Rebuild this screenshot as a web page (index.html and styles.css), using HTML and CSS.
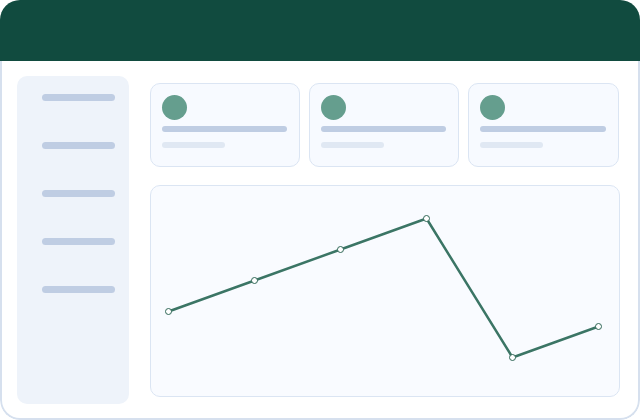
FILE: index.html
```html
<!DOCTYPE html>
<html lang="en">
<head>
    <meta charset="UTF-8" />
    <title>Dashboard</title>
    <link rel="stylesheet" href="styles.css">
</head>
<body>

<div class="window">
    <!-- top bar -->
    <div class="topbar"></div>

    <div class="content">
        <!-- left menu placeholder -->
        <div class="sidebar">
            <div class="menu-item"></div>
            <div class="menu-item"></div>
            <div class="menu-item"></div>
            <div class="menu-item"></div>
            <div class="menu-item"></div>
        </div>

        <div class="main">
            <div class="cards">
                <div class="card">
                    <div class="avatar"></div>
                    <div class="line"></div>
                    <div class="line short"></div>
                </div>
                <div class="card">
                    <div class="avatar"></div>
                    <div class="line"></div>
                    <div class="line short"></div>
                </div>
                <div class="card">
                    <div class="avatar"></div>
                    <div class="line"></div>
                    <div class="line short"></div>
                </div>
            </div>

            <!-- chart -->
            <div class="chart">
                <svg viewBox="0 0 468 210" width="468" height="210">
                    <polyline class="chart-line" points="17.5,125.5 103.5,94.5 189.5,63.5 275.5,32.5 361.5,171.5 447.5,140.5" />
                    <circle class="dot" cx="17.5" cy="125.5" r="3" />
                    <circle class="dot" cx="103.5" cy="94.5" r="3" />
                    <circle class="dot" cx="189.5" cy="63.5" r="3" />
                    <circle class="dot" cx="275.5" cy="32.5" r="3" />
                    <circle class="dot" cx="361.5" cy="171.5" r="3" />
                    <circle class="dot" cx="447.5" cy="140.5" r="3" />
                </svg>
            </div>
        </div>
    </div>
</div>

</body>
</html>
```

FILE: styles.css
```css
body {
    margin: 0;
    padding: 0;
    font-family: "Liberation Sans", Arial, sans-serif;
    background: #ffffff;
}

.window {
    width: 640px;
    height: 420px;
    border-radius: 20px;
    overflow: hidden;
    display: flex;
    flex-direction: column;
}

.topbar {
    height: 61px;
    background-color: #114b3f;
}

.content {
    flex: 1;
    box-sizing: border-box;
    border: 2px solid #d6e0ee;
    border-top: none;
    border-radius: 0 0 20px 20px;
    background: #ffffff;
    padding: 15px 19px 14px 15px;
    display: grid;
    grid-template-columns: 112px 1fr;
    column-gap: 21px;
}

/* sidebar */
.sidebar {
    background-color: #eef3fa;
    border-radius: 10px;
    padding: 18px 0 0 25px;
    display: flex;
    flex-direction: column;
    gap: 41px;
}
.menu-item {
    width: 73px;
    height: 7px;
    border-radius: 4px;
    background-color: #bfcde3;
}

.main {
    padding: 7px 0;
    display: flex;
    flex-direction: column;
    gap: 18px;
}

/* stat cards */
.cards {
    display: grid;
    grid-template-columns: 150px 150px 1fr;
    gap: 9px;
    padding-right: 1px;
}
.card {
    height: 84px;
    box-sizing: border-box;
    border: 1px solid #dbe5f3;
    border-radius: 10px;
    background-color: #f7faff;
    padding: 11px 12px 0 11px;
}
.avatar {
    width: 25px;
    height: 25px;
    border-radius: 50%;
    background-color: #659e8e;
}
.line {
    height: 6px;
    border-radius: 3px;
    background-color: #bfcde3;
    margin-top: 6px;
}
.line.short {
    width: 63px;
    height: 6px;
    margin-top: 10px;
    background-color: #e0e8f3;
}

/* chart */
.chart {
    flex: 1;
    box-sizing: border-box;
    border: 1px solid #dbe5f3;
    border-radius: 10px;
    background-color: #f9fbff;
    overflow: hidden;
}
.chart svg {
    display: block;
}
.chart-line {
    fill: none;
    stroke: #3b7565;
    stroke-width: 2.5;
    stroke-linejoin: round;
}
.dot {
    fill: #ffffff;
    stroke: #2f6656;
    stroke-width: 1;
}
```
